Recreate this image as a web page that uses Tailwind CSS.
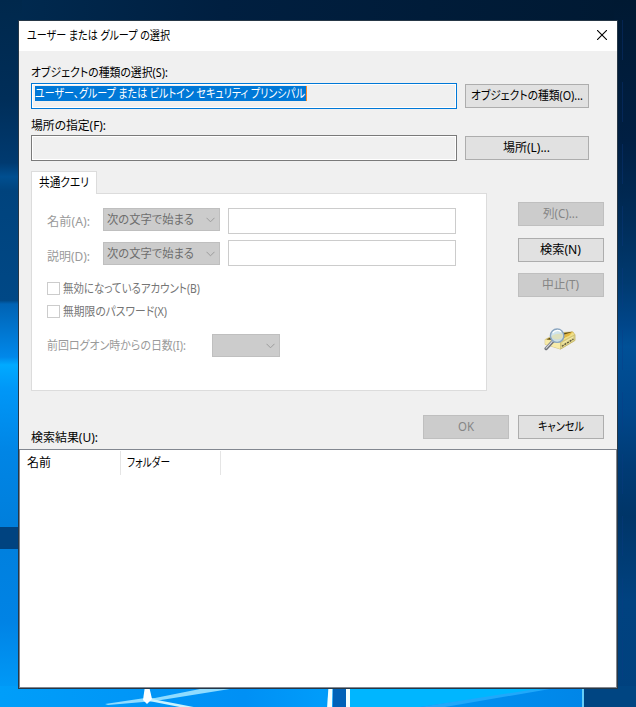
<!DOCTYPE html>
<html lang="ja">
<head>
<meta charset="utf-8">
<title>ユーザー または グループ の選択</title>
<script src="https://cdn.jsdelivr.net/npm/@tailwindcss/browser@4"></script>
</head>
<body class="relative w-[636px] h-[707px] overflow-hidden bg-[#002448] font-['Noto_Sans','Noto_Sans_CJK_JP',sans-serif] text-[12px] leading-4 text-black [font-feature-settings:'palt']">
<!-- Desktop wallpaper -->
<svg class="absolute inset-0" width="636" height="707" viewBox="0 0 636 707" aria-hidden="true">
  <defs>
    <linearGradient id="top" x1="0" x2="1" y1="0" y2="0"><stop offset="0" stop-color="#002a50"/><stop offset=".35" stop-color="#001f40"/><stop offset="1" stop-color="#001932"/></linearGradient>
    <linearGradient id="left" gradientUnits="userSpaceOnUse" x1="0" x2="0" y1="0" y2="707">
      <stop offset="0" stop-color="#00284c"/><stop offset=".14" stop-color="#002e59"/><stop offset=".23" stop-color="#003a70"/><stop offset=".25" stop-color="#004f90"/><stop offset=".27" stop-color="#00437d"/><stop offset=".425" stop-color="#004886"/><stop offset=".43" stop-color="#0063b4"/><stop offset=".505" stop-color="#0088ea"/><stop offset=".516" stop-color="#00aaff"/><stop offset=".55" stop-color="#0097f7"/><stop offset=".64" stop-color="#0085e5"/><stop offset=".74" stop-color="#007fdc"/><stop offset=".88" stop-color="#0083e5"/><stop offset=".98" stop-color="#009bf8"/></linearGradient>
    <linearGradient id="right" gradientUnits="userSpaceOnUse" x1="0" x2="0" y1="0" y2="707">
      <stop offset="0" stop-color="#001932"/><stop offset=".2" stop-color="#001f43"/><stop offset=".31" stop-color="#002c58"/><stop offset=".4" stop-color="#003a70"/><stop offset=".46" stop-color="#00468a"/><stop offset=".49" stop-color="#005097"/><stop offset=".58" stop-color="#00478b"/><stop offset=".66" stop-color="#003b75"/><stop offset=".73" stop-color="#003568"/><stop offset=".85" stop-color="#004280"/><stop offset="1" stop-color="#00417e"/></linearGradient>
    <linearGradient id="bot" x1="0" x2="1" y1="0" y2="0"><stop offset="0" stop-color="#009ef9"/><stop offset=".42" stop-color="#0090f5"/><stop offset=".55" stop-color="#009cfa"/><stop offset="1" stop-color="#0086e8"/></linearGradient>
    <filter id="soft"><feGaussianBlur stdDeviation=".7"/></filter>
  </defs>
  <rect width="636" height="24" fill="url(#top)"/>
  <rect width="22" height="707" fill="url(#left)"/>
  <rect y="527" width="22" height="22" fill="#004380"/>
  <rect x="614" width="22" height="707" fill="url(#right)"/>
  <path d="M622.5 20V688" stroke="#0b3a86" stroke-opacity=".35" stroke-dasharray="40 22"/>
  <rect y="686" width="583" height="21" fill="url(#bot)"/>
  <path d="M349 686H545V689L420 707H349Z" fill="#00b6ff"/>
  <path d="M530 690 420 707H445L550 689Z" fill="#20a8fa"/>
  <path d="M583 686H636V707H583Z" fill="#004582"/>
  <g filter="url(#soft)">
    <path d="M105 704 145 698 155 698 205 688H236L155 701 108 705Z" fill="#8fdcff"/>
    <path d="M152 699 204 709H190L149 701Z" fill="#c8f3ff"/>
    <path d="M145 686H149L152 699 147 704 143 700Z" fill="#fff"/>
    <path d="M328.500 686H332.500L332 709H327Z" fill="#f2ffff"/>
    <path d="M346 686H350V709H346Z" fill="#f2ffff"/>
  </g>
  <rect x="333" y="686" width="13" height="21" fill="#0062b8"/>
  <rect x="582" y="688" width="2" height="19" fill="#66cdf7"/>
</svg>

<main class="relative ml-[18px] mt-5 w-[600px] h-[669px] border border-[#263746] bg-[#f0f0f0] flex flex-col float-left">
  <header class="h-[30px] shrink-0 bg-white flex items-center justify-between pl-2 pr-[10px]">
    <svg class="block h-4 w-[143px] overflow-visible" fill="currentColor"><text y="12" textLength="143" lengthAdjust="spacingAndGlyphs">ユーザー または グループ の選択</text></svg>
    <svg class="-mt-0.5" width="10" height="10" viewBox="0 0 10 10"><path d="M0 0 10 10M10 0 0 10" stroke="#000" stroke-width="1.100"/></svg>
  </header>

  <section class="h-[398px] shrink-0 pl-3 flex flex-col">
    <div class="h-8 pt-[13px]"><svg class="block h-4 w-[137px] overflow-visible" fill="currentColor"><text y="12.500" textLength="137" lengthAdjust="spacingAndGlyphs">オブジェクトの種類の選択(S):</text></svg></div>
    <div class="flex items-center gap-2">
      <div class="w-[426px] h-[26px] border border-[#0078d7] p-px bg-white"><div class="h-full bg-[#f0f0f0] pt-px pl-0.5">
        <div class="w-[272px] h-[15px] bg-[#0078d7] border-r border-[#ff8a24] text-white"><svg class="block h-[15px] w-[270px] overflow-visible" fill="currentColor"><text y="12" textLength="270" lengthAdjust="spacingAndGlyphs">ユーザー、グループ または ビルトイン セキュリティ プリンシパル</text></svg></div>
      </div></div>
      <button class="w-[124px] h-6 border border-[#adadad] bg-[#e1e1e1] flex items-center justify-center"><svg class="block h-4 w-[112px] overflow-visible" fill="currentColor"><text y="12" textLength="112" lengthAdjust="spacingAndGlyphs">オブジェクトの種類(O)...</text></svg></button>
    </div>
    <div class="h-[26px] pt-2"><svg class="block h-4 w-[75px] overflow-visible" fill="currentColor"><text y="12.500" textLength="75" lengthAdjust="spacingAndGlyphs">場所の指定(F):</text></svg></div>
    <div class="flex items-center gap-2">
      <div class="w-[426px] h-[26px] border border-[#7a7a7a] p-px bg-white"><div class="h-full bg-[#f0f0f0]"></div></div>
      <button class="w-[124px] h-6 border border-[#adadad] bg-[#e1e1e1] flex items-center justify-center"><svg class="block h-4 w-[48px] overflow-visible" fill="currentColor"><text y="12" textLength="47" lengthAdjust="spacingAndGlyphs">場所(L)...</text></svg></button>
    </div>

    <div class="flex pt-[10px]">
      <div class="w-[456px]">
        <div class="relative z-10 w-[66px] h-[23px] border border-b-0 border-[#dcdcdc] bg-white pl-[7px] pt-[2px]"><svg class="block h-4 w-[50px] overflow-visible" fill="currentColor"><text y="13" textLength="50" lengthAdjust="spacingAndGlyphs">共通クエリ</text></svg></div>
        <div class="-mt-px w-[456px] h-[198px] border border-[#dcdcdc] bg-white pl-[15px] pt-[14px] text-[#838383]">
          <div class="flex h-8">
            <span class="w-14 pt-[5px] text-[#9a9a9a]"><svg class="block h-4 w-[43px] overflow-visible" fill="currentColor"><text y="13" textLength="43" lengthAdjust="spacingAndGlyphs">名前(A):</text></svg></span>
            <div class="w-[117px] h-[23px] border border-[#bfbfbf] bg-[#ccc] flex items-center pl-[3px] pr-1 text-[#6d6d6d]"><svg class="block h-4 w-[87px] overflow-visible" fill="currentColor"><text y="12" textLength="87" lengthAdjust="spacingAndGlyphs">次の文字で始まる</text></svg><svg class="ml-auto" width="9" height="6" viewBox="0 0 9 6" fill="none"><path d="M.5 .8 4.500 4.800 8.500 .8" stroke="#9c9c9c"/></svg></div>
            <div class="ml-2 w-[228px] h-[26px] border border-[#ccc]"></div>
          </div>
          <div class="flex h-[42px]">
            <span class="w-14 pt-2 text-[#9a9a9a]"><svg class="block h-4 w-[43px] overflow-visible" fill="currentColor"><text y="13" textLength="43" lengthAdjust="spacingAndGlyphs">説明(D):</text></svg></span>
            <div class="mt-0.5 w-[117px] h-[23px] border border-[#bfbfbf] bg-[#ccc] flex items-center pl-[3px] pr-1 text-[#6d6d6d]"><svg class="block h-4 w-[87px] overflow-visible" fill="currentColor"><text y="12" textLength="87" lengthAdjust="spacingAndGlyphs">次の文字で始まる</text></svg><svg class="ml-auto" width="9" height="6" viewBox="0 0 9 6" fill="none"><path d="M.5 .8 4.500 4.800 8.500 .8" stroke="#9c9c9c"/></svg></div>
            <div class="ml-2 w-[228px] h-[26px] border border-[#ccc]"></div>
          </div>
          <div class="flex h-[23px] gap-[3px] text-[#757575]"><i class="block w-[13px] h-[13px] border border-[#ccc]"></i><svg class="-mt-px block h-4 w-[137px] overflow-visible" fill="currentColor"><text y="12" textLength="137" lengthAdjust="spacingAndGlyphs">無効になっているアカウント(B)</text></svg></div>
          <div class="flex h-[29px] gap-[3px] text-[#757575]"><i class="block w-[13px] h-[13px] border border-[#ccc]"></i><svg class="-mt-px block h-4 w-[104px] overflow-visible" fill="currentColor"><text y="12" textLength="104" lengthAdjust="spacingAndGlyphs">無期限のパスワード(X)</text></svg></div>
          <div class="flex">
            <span class="w-[165px] pt-1 text-[#9a9a9a]"><svg class="block h-4 w-[139px] overflow-visible" fill="currentColor"><text y="12" textLength="139" lengthAdjust="spacingAndGlyphs">前回ログオン時からの日数(I):</text></svg></span>
            <div class="w-[68px] h-[23px] border border-[#bfbfbf] bg-[#ccc] flex items-center pr-1"><svg class="ml-auto" width="9" height="6" viewBox="0 0 9 6" fill="none"><path d="M.5 .8 4.500 4.800 8.500 .8" stroke="#9c9c9c"/></svg></div>
          </div>
        </div>
      </div>
      <div class="ml-[31px] w-[86px] pt-[31px] flex flex-col">
        <button class="h-6 border border-[#bfbfbf] bg-[#ccc] text-[#858585] flex items-center justify-center"><svg class="block h-4 w-[36px] overflow-visible" fill="currentColor"><text y="12" textLength="35" lengthAdjust="spacingAndGlyphs">列(C)...</text></svg></button>
        <button class="mt-3 h-6 border border-[#adadad] bg-[#e1e1e1] flex items-center justify-center"><svg class="block h-4 w-[42px] overflow-visible" fill="currentColor"><text y="12" textLength="41" lengthAdjust="spacingAndGlyphs">検索(N)</text></svg></button>
        <button class="mt-[11px] h-6 border border-[#bfbfbf] bg-[#ccc] text-[#858585] flex items-center justify-center"><svg class="block h-4 w-[38px] overflow-visible" fill="currentColor"><text y="12" textLength="37" lengthAdjust="spacingAndGlyphs">中止(T)</text></svg></button>
        <!-- Search folder -->
        <svg class="mt-[31px] ml-[26px]" width="33" height="24" viewBox="0 0 34 25">
          <path d="M1 12 15 5 30 4 32 7V13L17 22 1 17Z" fill="#f0df87" stroke="#c4ad54" stroke-width=".6"/>
          <path d="M2 12 15 6 29 4 17 13Z" fill="#5d4914"/>
          <path d="M17 8 30 4 26 8 17 12Z" fill="#e2b840"/>
          <path d="M1 12 17 15V22L1 17Z" fill="#f7ebaa"/>
          <path d="M17 15 32 7V13L17 22Z" fill="#dfd48a" stroke="#b9aa60" stroke-width=".5"/>
          <path d="M18.500 19 30.500 11.500" stroke="#514c37" stroke-width="1.300" stroke-dasharray="2 1.200"/>
          <path d="M19 16 30 9.500" stroke="#f6ecb0"/>
          <path d="M9 14 2 21.500" stroke="#6f7278" stroke-width="3.400" stroke-linecap="round"/>
          <path d="M8.500 14 2 21" stroke="#d3d6dc" stroke-width="1.300" stroke-linecap="round"/>
          <circle cx="13.500" cy="8" r="7" fill="#cfe4ec" fill-opacity=".95" stroke="#8aa5c0" stroke-width="1.500"/>
          <path d="M8 8.500C11 5.500 15 6.500 19 6V10C15 13 10 12 8 10Z" fill="#dfe0b8" fill-opacity=".85"/>
          <path d="M9 5C11 2 15 2 17.500 4" stroke="#fff" fill="none" stroke-width="1.300"/>
        </svg>
      </div>
    </div>
    <div class="flex pt-6">
      <div class="w-[392px] pt-[14px]"><svg class="block h-4 w-[67px] overflow-visible" fill="currentColor"><text y="13" textLength="67" lengthAdjust="spacingAndGlyphs">検索結果(U):</text></svg></div>
      <button class="w-[86px] h-6 border border-[#bfbfbf] bg-[#ccc] text-[#858585] flex items-center justify-center"><svg class="block h-4 w-4 overflow-visible" fill="currentColor"><text y="12" textLength="16" lengthAdjust="spacingAndGlyphs">OK</text></svg></button>
      <button class="ml-[9px] w-[86px] h-6 border border-[#adadad] bg-[#e1e1e1] flex items-center justify-center"><svg class="block h-4 w-[46px] overflow-visible" fill="currentColor"><text y="12" textLength="46" lengthAdjust="spacingAndGlyphs">キャンセル</text></svg></button>
    </div>
  </section>

  <section class="grow border border-[#828790] bg-white">
    <div class="mt-px h-6 flex">
      <div class="w-[101px] pl-[7px] pt-1 border-r border-[#e5e5e5]"><svg class="block h-4 w-6 overflow-visible" fill="currentColor"><text y="12" textLength="24" lengthAdjust="spacingAndGlyphs">名前</text></svg></div>
      <div class="w-[100px] pl-[6px] pt-1 border-r border-[#e5e5e5]"><svg class="block h-4 w-[43px] overflow-visible" fill="currentColor"><text y="12" textLength="43" lengthAdjust="spacingAndGlyphs">フォルダー</text></svg></div>
    </div>
  </section>
</main>
</body>
</html>
